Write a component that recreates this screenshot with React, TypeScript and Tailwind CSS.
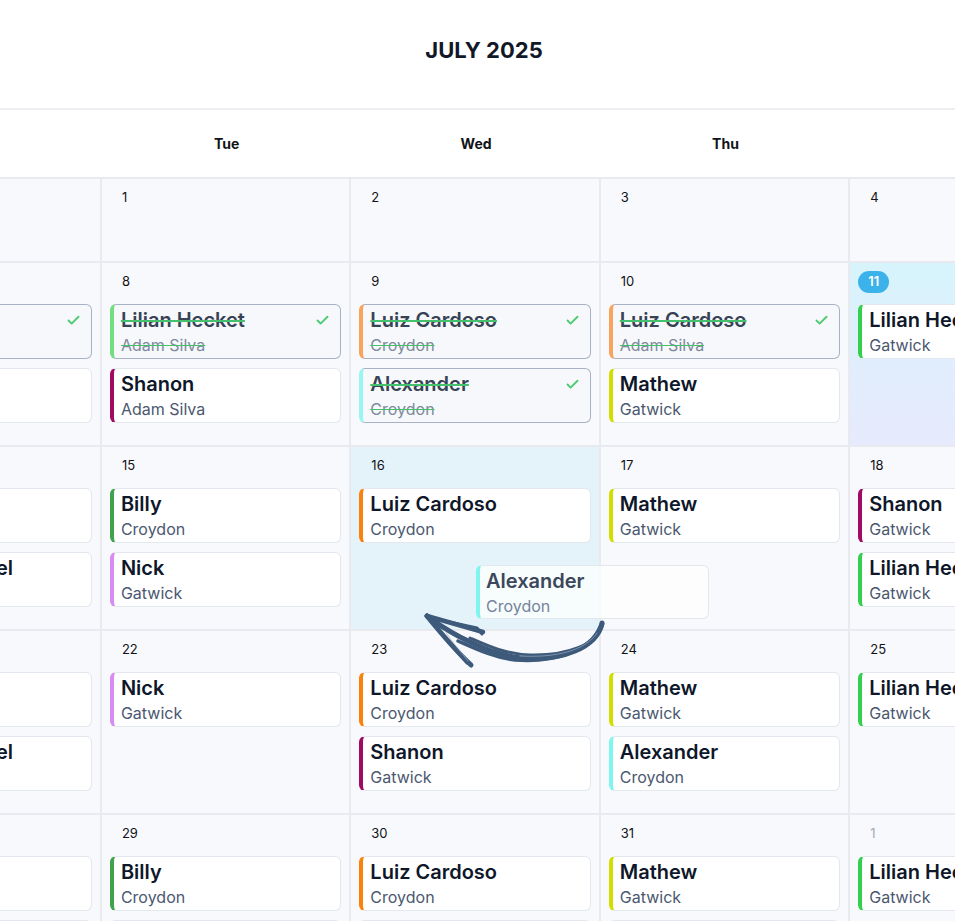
import React from 'react';
import { Check } from 'lucide-react';

type Ev = {
  name: string;
  sub: string;
  bar: string;
  done?: boolean;
};

type Day = {
  num: number;
  muted?: boolean;
  today?: boolean;
  target?: boolean;
  events: Ev[];
};

const LILIAN = 'border-l-[#33d14b]';
const LILIAN_DONE = 'border-l-[#72de80]';
const LUIZ = 'border-l-[#fb820a]';
const LUIZ_DONE = 'border-l-[#f9a35c]';
const ALEX = 'border-l-[#7ef6ef]';
const ALEX_DONE = 'border-l-[#9af5f0]';
const SHANON = 'border-l-[#a10a62]';
const MATHEW = 'border-l-[#d3dd00]';
const BILLY = 'border-l-[#3fa34d]';
const NICK = 'border-l-[#d88bf2]';

const weeks: Day[][] = [
  [
    { num: 30, muted: true, events: [] },
    { num: 1, events: [] },
    { num: 2, events: [] },
    { num: 3, events: [] },
    { num: 4, events: [] },
    { num: 5, events: [] },
    { num: 6, events: [] },
  ],
  [
    {
      num: 7,
      events: [
        { name: 'Luiz Cardoso', sub: 'Croydon', bar: LUIZ_DONE, done: true },
        { name: 'Billy', sub: 'Croydon', bar: BILLY },
      ],
    },
    {
      num: 8,
      events: [
        { name: 'Lilian Hecket', sub: 'Adam Silva', bar: LILIAN_DONE, done: true },
        { name: 'Shanon', sub: 'Adam Silva', bar: SHANON },
      ],
    },
    {
      num: 9,
      events: [
        { name: 'Luiz Cardoso', sub: 'Croydon', bar: LUIZ_DONE, done: true },
        { name: 'Alexander', sub: 'Croydon', bar: ALEX_DONE, done: true },
      ],
    },
    {
      num: 10,
      events: [
        { name: 'Luiz Cardoso', sub: 'Adam Silva', bar: LUIZ_DONE, done: true },
        { name: 'Mathew', sub: 'Gatwick', bar: MATHEW },
      ],
    },
    { num: 11, today: true, events: [{ name: 'Lilian Hecket', sub: 'Gatwick', bar: LILIAN }] },
    { num: 12, events: [] },
    { num: 13, events: [] },
  ],
  [
    {
      num: 14,
      events: [
        { name: 'Mathew', sub: 'Gatwick', bar: MATHEW },
        { name: 'Samuel Michel', sub: 'Gatwick', bar: SHANON },
      ],
    },
    {
      num: 15,
      events: [
        { name: 'Billy', sub: 'Croydon', bar: BILLY },
        { name: 'Nick', sub: 'Gatwick', bar: NICK },
      ],
    },
    { num: 16, target: true, events: [{ name: 'Luiz Cardoso', sub: 'Croydon', bar: LUIZ }] },
    { num: 17, events: [{ name: 'Mathew', sub: 'Gatwick', bar: MATHEW }] },
    {
      num: 18,
      events: [
        { name: 'Shanon', sub: 'Gatwick', bar: SHANON },
        { name: 'Lilian Hecket', sub: 'Gatwick', bar: LILIAN },
      ],
    },
    { num: 19, events: [] },
    { num: 20, events: [] },
  ],
  [
    {
      num: 21,
      events: [
        { name: 'Mathew', sub: 'Gatwick', bar: MATHEW },
        { name: 'Samuel Michel', sub: 'Croydon', bar: BILLY },
      ],
    },
    { num: 22, events: [{ name: 'Nick', sub: 'Gatwick', bar: NICK }] },
    {
      num: 23,
      events: [
        { name: 'Luiz Cardoso', sub: 'Croydon', bar: LUIZ },
        { name: 'Shanon', sub: 'Gatwick', bar: SHANON },
      ],
    },
    {
      num: 24,
      events: [
        { name: 'Mathew', sub: 'Gatwick', bar: MATHEW },
        { name: 'Alexander', sub: 'Croydon', bar: ALEX },
      ],
    },
    { num: 25, events: [{ name: 'Lilian Hecket', sub: 'Gatwick', bar: LILIAN }] },
    { num: 26, events: [] },
    { num: 27, events: [] },
  ],
  [
    {
      num: 28,
      events: [
        { name: 'Mathew', sub: 'Gatwick', bar: MATHEW },
        { name: 'Nick', sub: 'Gatwick', bar: NICK },
      ],
    },
    {
      num: 29,
      events: [
        { name: 'Billy', sub: 'Croydon', bar: BILLY },
        { name: 'Nick', sub: 'Gatwick', bar: NICK },
      ],
    },
    {
      num: 30,
      events: [
        { name: 'Luiz Cardoso', sub: 'Croydon', bar: LUIZ },
        { name: 'Shanon', sub: 'Gatwick', bar: SHANON },
      ],
    },
    {
      num: 31,
      events: [
        { name: 'Mathew', sub: 'Gatwick', bar: MATHEW },
        { name: 'Alexander', sub: 'Croydon', bar: ALEX },
      ],
    },
    { num: 1, muted: true, events: [{ name: 'Lilian Hecket', sub: 'Gatwick', bar: LILIAN }] },
    { num: 2, muted: true, events: [] },
    { num: 3, muted: true, events: [] },
  ],
];

const weekdays = ['Mon', 'Tue', 'Wed', 'Thu', 'Fri', 'Sat', 'Sun'];

const EventCard: React.FC<{ ev: Ev }> = ({ ev }) => (
  <div
    className={`h-[55px] rounded-md border border-l-4 ${ev.bar} ${
      ev.done ? 'border-[#a7b3c5] bg-[#f6f8fb]' : 'border-[#e3e7ee] bg-white'
    } flex flex-col justify-center gap-[2px] pl-[7px] pr-[10px] pt-[1px]`}
  >
    <div className="flex items-center justify-between">
      <span
        className={`text-[20px] leading-6 font-semibold whitespace-nowrap ${
          ev.done
            ? 'text-[#374355] line-through decoration-[#45c16d] decoration-[1.5px]'
            : 'text-[#0f172a]'
        }`}
      >
        {ev.name}
      </span>
      {ev.done && <Check size={15} strokeWidth={3} className="text-[#4fcb6f] shrink-0" />}
    </div>
    <span
      className={`text-[16px] leading-[22px] whitespace-nowrap ${
        ev.done
          ? 'text-[#7f8a9c] line-through decoration-[#45c16d] decoration-[1px]'
          : 'text-[#4b5870]'
      }`}
    >
      {ev.sub}
    </span>
  </div>
);

const DayCell: React.FC<{ day: Day; first: boolean }> = ({ day, first }) => {
  const bg = day.today
    ? 'bg-gradient-to-b from-[#d6f4fc] via-[#e0eefc] to-[#e6eafd]'
    : day.target
      ? 'bg-[#e4f3f9]'
      : 'bg-[#f8f9fc]';
  return (
    <div
      className={`border-r-2 border-b-2 border-[#e8eaef] ${bg} ${
        first ? 'min-h-[84px]' : ''
      } px-2 pb-[22px]`}
    >
      <div className="h-[41px] pt-[5px]">
        {day.today ? (
          <span className="mt-[2px] inline-flex h-[22px] items-center rounded-full bg-[#3cb2ea] px-[10px] text-[13px] font-semibold text-white">
            {day.num}
          </span>
        ) : (
          <span
            className={`inline-block pl-[12px] text-[13px] leading-4 ${
              day.muted ? 'text-[#a3a9b4]' : 'text-[#111318]'
            }`}
          >
            {day.num}
          </span>
        )}
      </div>
      <div className="flex flex-col gap-[9px]">
        {day.events.map((ev, i) => (
          <EventCard key={i} ev={ev} />
        ))}
      </div>
    </div>
  );
};

export default function App() {
  return (
    <div
      className="relative h-[921px] w-full overflow-hidden bg-white"
      style={{ fontFamily: 'Inter, "Noto Sans", sans-serif' }}
    >
      <div className="flex h-[110px] items-center justify-center border-b-2 border-[#eceef2] pb-[7px] pl-[13px]">
        <h1 className="text-[22px] font-bold text-[#111827]">JULY 2025</h1>
      </div>

      <div className="ml-[-147.5px] w-[1746px]">
        <div className="grid h-[69px] grid-cols-7 border-b-2 border-[#e8eaef]">
          {weekdays.map((d) => (
            <div key={d} className="flex items-center justify-center text-[14px] font-bold text-[#111318]">
              {d}
            </div>
          ))}
        </div>

        <div className="grid grid-cols-7">
          {weeks.map((week, wi) =>
            week.map((day, di) => <DayCell key={`${wi}-${di}`} day={day} first={wi === 0} />),
          )}
        </div>
      </div>

      {/* card being dragged */}
      <div className="absolute left-[476px] top-[565px] flex h-[54px] w-[233px] flex-col justify-center gap-[2px] rounded-md border border-l-4 border-[#e3e8ef] border-l-[#7ff5ee] bg-white/70 pl-[6px] pt-[1px]">
        <span className="text-[20px] leading-6 font-semibold text-[#3b475a]">Alexander</span>
        <span className="text-[16px] leading-[22px] text-[#76839a]">Croydon</span>
      </div>

      {/* hand drawn arrow */}
      <svg
        className="absolute left-[415px] top-[605px]"
        width="195"
        height="70"
        viewBox="415 605 195 70"
        fill="none"
        strokeLinecap="round"
        strokeLinejoin="round"
      >
        <g stroke="#3e5a7b">
          <path d="M602 623 C597 648 562 661 522 658 C500 656 480 647 460 637 C447 630 436 623 427 616" strokeWidth="5" />
          <path d="M600 627 C590 651 555 663 515 660 C495 658 476 649 458 641" strokeWidth="3.5" />
          <path d="M603 624 C598 645 566 656 530 655 C505 654 488 646 470 638" strokeWidth="3" />
          <path d="M427 616 L483 632" strokeWidth="4.5" />
          <path d="M431 618 L477 628 L482 634" strokeWidth="3" />
          <path d="M427 616 C440 632 455 650 471 665" strokeWidth="5" />
          <path d="M431 620 C444 637 457 652 467 663" strokeWidth="3" />
        </g>
        <g stroke="#9fb1c6" strokeWidth="0.8" opacity="0.8">
          <path d="M597 633 C585 651 555 658 520 656" />
          <path d="M445 631 C455 646 462 653 468 661" />
        </g>
      </svg>
    </div>
  );
}
